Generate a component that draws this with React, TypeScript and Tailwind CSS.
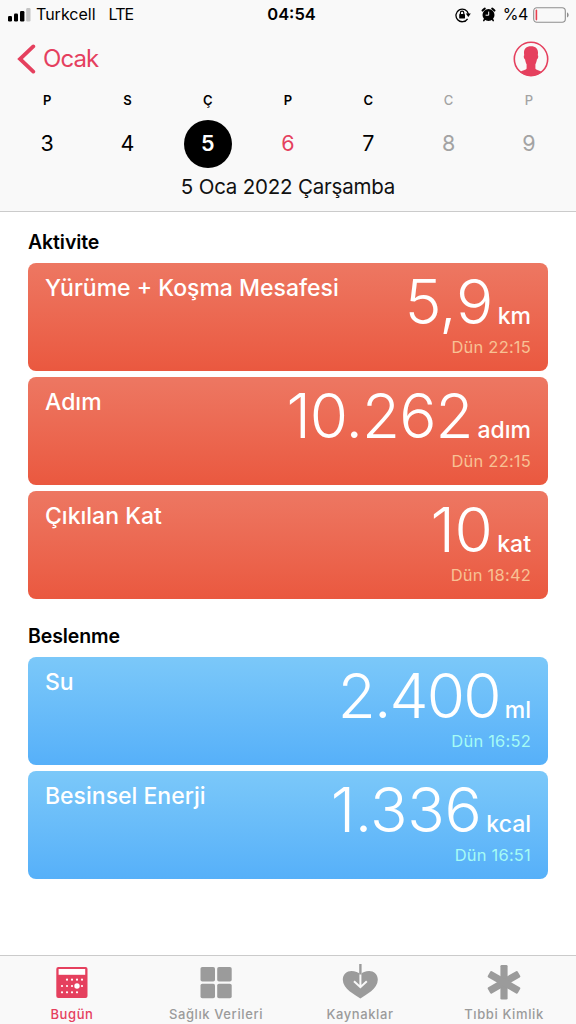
import clsx from 'clsx';
import type { ReactNode } from 'react';

interface Metric {
    title: string;
    value: string;
    unit: string;
    time: string;
    valueClass: string;
}

const days = [
    { label: 'P', day: 3 },
    { label: 'S', day: 4 },
    { label: 'Ç', day: 5, selected: true },
    { label: 'P', day: 6, today: true },
    { label: 'C', day: 7 },
    { label: 'C', day: 8, weekend: true },
    { label: 'P', day: 9, weekend: true },
];

const activity: Metric[] = [
    { title: 'Yürüme + Koşma Mesafesi', value: '5,9', unit: 'km', time: 'Dün 22:15', valueClass: 'tracking-[-0.5px]' },
    { title: 'Adım', value: '10.262', unit: 'adım', time: 'Dün 22:15', valueClass: 'tracking-[-1px]' },
    { title: 'Çıkılan Kat', value: '10', unit: 'kat', time: 'Dün 18:42', valueClass: 'tracking-[-0.5px]' },
];

const nutrition: Metric[] = [
    { title: 'Su', value: '2.400', unit: 'ml', time: 'Dün 16:52', valueClass: 'tracking-[-1.8px]' },
    { title: 'Besinsel Enerji', value: '1.336', unit: 'kcal', time: 'Dün 16:51', valueClass: 'tracking-[-0.4px]' },
];

const StatusBar = () => (
    <div className="flex h-[29px] items-center text-[16px] leading-[29px] text-black">
        <div className="flex flex-1 items-center pl-2">
            <svg width="23" height="14" viewBox="0 0 23 14">
                <rect x="0" y="8" width="4" height="5.5" rx="1.2" />
                <rect x="6" y="5.5" width="4" height="8" rx="1.2" />
                <rect x="12" y="3" width="4.4" height="10.5" rx="1.2" />
                <rect x="18.2" y="0" width="4.3" height="13.5" rx="1.2" fill="#c4c4c4" />
            </svg>
            <span className="ml-[5px]">Turkcell</span>
            <span className="ml-[13px] tracking-[-0.9px]">LTE</span>
        </div>
        <span className="mr-[-3px] ml-[3px] text-[16.5px] font-semibold">04:54</span>
        <div className="flex flex-1 items-center justify-end pr-[7px]">
            <svg width="16" height="16" viewBox="0 0 16 16" fill="none">
                <path d="M12.6 11.8A6.3 6.3 0 1 1 13.4 7" stroke="#000" strokeWidth="1.3" />
                <path d="M10.8 6.6h5l-2.5 3.4z" fill="#000" />
                <rect x="4.2" y="7" width="5.8" height="4.6" rx="0.7" fill="#000" />
                <path d="M5.4 7V5.9a1.7 1.7 0 0 1 3.4 0V7" stroke="#000" strokeWidth="1.2" />
            </svg>
            <svg className="ml-[10px]" width="15" height="15" viewBox="0 0 15 15" fill="none">
                <circle cx="7.5" cy="8" r="6" fill="#000" />
                <path d="M1.5 3.6A9 9 0 0 1 3.8 1.6M13.5 3.6a9 9 0 0 0-2.300-2" stroke="#000" strokeWidth="2" strokeLinecap="round" />
                <path d="M3.6 12.2 2.8 13.600M11.4 12.2l.8 1.400" stroke="#000" strokeWidth="1.6" strokeLinecap="round" />
                <path d="M7.7 4.6v3.6H4.6" stroke="#fff" strokeWidth="1" />
            </svg>
            <span className="ml-[7px] tracking-[-0.4px]">%4</span>
            <svg className="ml-[5px]" width="36" height="16" viewBox="0 0 36 16" fill="none">
                <rect x="0.7" y="0.8" width="31.6" height="14.4" rx="3.2" stroke="#8e8e8e" strokeWidth="1.1" />
                <rect x="2.6" y="2.6" width="1.6" height="10.8" rx="0.8" fill="#e8404f" />
                <path d="M34 5.6c2.2.6 2.2 4.2 0 4.8z" fill="#8e8e8e" />
            </svg>
        </div>
    </div>
);

const Header = () => (
    <header className="flex h-[212px] shrink-0 flex-col border-b border-[#cbcbcb] bg-[#f9f9f9]">
        <StatusBar />
        <div className="flex h-[60px] items-center justify-between pr-[27px] pl-[17px] text-[#e5405e]">
            <button className="flex items-center text-[24px] leading-none">
                <svg width="19" height="30" viewBox="0 0 19 30" fill="none">
                    <path d="M16.3 2.4 3 15l13.3 12.6" stroke="currentColor" strokeWidth="3.8" strokeLinecap="round" strokeLinejoin="miter" />
                </svg>
                <span className="ml-[7px] tracking-[-0.9px]">Ocak</span>
            </button>
            <svg width="36" height="36" viewBox="0 0 36 36" fill="none">
                <circle cx="18" cy="18" r="16.7" stroke="currentColor" strokeWidth="1.6" />
                <path
                    d="M18 5.300c-4.900 0-7.200 2.900-7 6.900l.2 2.100c-.9.500-.3 3.700.9 4.100.3 2.100.9 3.800 1.500 4.900v4.200c-.3 1.500-4.300 2-6.600 3.400A16.700 16.700 0 0 0 29 30.900c-2.300-1.400-6.300-1.900-6.600-3.400v-4.200c.6-1.100 1.200-2.800 1.500-4.900 1.200-.4 1.800-3.600.9-4.100l.2-2.100c.2-4-2.100-6.900-7-6.900z"
                    fill="currentColor"
                />
            </svg>
        </div>
        <div className="grid grid-cols-7 px-[7px]">
            {days.map((d) => (
                <div
                    key={d.day}
                    className={clsx('flex flex-col items-center', d.weekend ? 'text-[#a3a3a3]' : 'text-black')}
                >
                    <span className={clsx('text-[13px] leading-[22px]', d.weekend ? 'font-medium' : 'font-semibold')}>{d.label}</span>
                    <span
                        className={clsx(
                            'mt-[9px] flex size-12 items-center justify-center rounded-full text-[21.5px] leading-none',
                            d.selected && 'bg-black font-semibold text-white',
                            d.today && 'text-[#e5405e]',
                        )}
                    >
                        {d.day}
                    </span>
                </div>
            ))}
        </div>
        <p className="mt-[5px] text-center text-[20.5px] leading-[28px] tracking-[-0.2px] text-[#111]">5 Oca 2022 Çarşamba</p>
    </header>
);

const MetricCard = ({ metric, tone }: { metric: Metric; tone: 'red' | 'blue' }) => (
    <div
        className={clsx(
            'flex h-[108px] justify-between rounded-lg bg-linear-to-b px-[17px] text-white',
            tone === 'red' ? 'from-[#ed7762] to-[#ea583f]' : 'from-[#7bc8f9] to-[#56b0f9]',
        )}
    >
        <h3 className="text-[23px] leading-[51px] font-medium whitespace-nowrap">{metric.title}</h3>
        <div className="flex flex-col items-end">
            <div className="flex h-[78px] items-baseline">
                <span className={clsx('text-[62px] leading-[77px] font-light', metric.valueClass)}>{metric.value}</span>
                <span className="ml-[5px] text-[23px] leading-none font-medium">{metric.unit}</span>
            </div>
            <span
                className={clsx(
                    'text-[16.5px] leading-[13px] tracking-[0.2px]',
                    tone === 'red' ? 'text-[#f8c194]' : 'text-[#a5fbf5]',
                )}
            >
                {metric.time}
            </span>
        </div>
    </div>
);

const Section = ({ title, metrics, tone, className }: { title: string; metrics: Metric[]; tone: 'red' | 'blue'; className?: string }) => (
    <section className={className}>
        <h2 className="text-[19.5px] leading-[41px] font-semibold tracking-[-0.1px] text-black">{title}</h2>
        <div className="flex flex-col gap-1.5">
            {metrics.map((m) => (
                <MetricCard key={m.title} metric={m} tone={tone} />
            ))}
        </div>
    </section>
);

const CalendarIcon = () => (
    <svg width="36" height="36" viewBox="0 0 36 36">
        <rect x="2.3" y="3" width="31.2" height="31" rx="2" fill="currentColor" />
        <rect x="4.6" y="5" width="26.6" height="5.8" fill="#fff" />
        <g fill="#fff">
            {[13, 18, 23, 28].map((x) => (
                <circle key={x} cx={x} cy="15.7" r="1.1" />
            ))}
            {[8, 13, 18, 28].map((x) => (
                <circle key={x} cx={x} cy="22" r="1.1" />
            ))}
            {[8, 13, 18, 23].map((x) => (
                <circle key={x} cx={x} cy="28.3" r="1.1" />
            ))}
            <circle cx="23" cy="22" r="2.7" />
        </g>
    </svg>
);

const GridIcon = () => (
    <svg width="36" height="36" viewBox="0 0 36 36" fill="currentColor">
        <rect x="2.5" y="3" width="14.5" height="14.5" rx="1.8" />
        <rect x="19.2" y="3" width="14.5" height="14.5" rx="1.8" />
        <rect x="2.5" y="19.7" width="14.5" height="14.5" rx="1.8" />
        <rect x="19.2" y="19.7" width="14.5" height="14.5" rx="1.8" />
    </svg>
);

const HeartIcon = () => (
    <svg width="36" height="36" viewBox="0 0 36 36" fill="none">
        <path
            d="M18.4 34.4C13 31 .8 24.500.8 15.700.8 10.200 5 7 9.400 7c3.600 0 7.400 1.200 9 3.600C20 8.200 23.600 7 27.200 7c4.400 0 8.600 3.200 8.600 8.700 0 8.800-12 15.300-17.400 18.700z"
            fill="currentColor"
        />
        <path d="M18.4 8v15M12 17.200l6.400 6 6.400-6" stroke="#f9f9f9" strokeWidth="2" />
        <path d="M18.4 0v10.500" stroke="currentColor" strokeWidth="2.4" />
    </svg>
);

const AsteriskIcon = () => (
    <svg width="36" height="36" viewBox="0 0 36 36" fill="currentColor">
        <rect x="14.4" y="1" width="7.2" height="34.6" rx="1.3" />
        <rect x="14.4" y="1" width="7.2" height="34.6" rx="1.3" transform="rotate(60 18 18.3)" />
        <rect x="14.4" y="1" width="7.2" height="34.6" rx="1.3" transform="rotate(-60 18 18.3)" />
    </svg>
);

const tabs: { label: string; icon: ReactNode; active?: boolean }[] = [
    { label: 'Bugün', icon: <CalendarIcon />, active: true },
    { label: 'Sağlık Verileri', icon: <GridIcon /> },
    { label: 'Kaynaklar', icon: <HeartIcon /> },
    { label: 'Tıbbi Kimlik', icon: <AsteriskIcon /> },
];

const TabBar = () => (
    <nav className="grid h-[69px] shrink-0 grid-cols-4 border-t border-[#cbcbcb] bg-[#f9f9f9]">
        {tabs.map((tab) => (
            <button
                key={tab.label}
                className={clsx('flex flex-col items-center pt-2', tab.active ? 'text-[#e5405e]' : 'text-[#9b9b9b]')}
            >
                {tab.icon}
                <span className="mt-[6px] text-[13px] leading-[17px] font-medium tracking-[0.6px]">{tab.label}</span>
            </button>
        ))}
    </nav>
);

const App = () => (
    <div className="flex h-screen w-full flex-col overflow-hidden bg-white font-['Inter',sans-serif]">
        <Header />
        <main className="flex-1 px-7">
            <Section title="Aktivite" metrics={activity} tone="red" className="pt-[10px]" />
            <Section title="Beslenme" metrics={nutrition} tone="blue" className="pt-[17px]" />
        </main>
        <TabBar />
    </div>
);

export default App;
